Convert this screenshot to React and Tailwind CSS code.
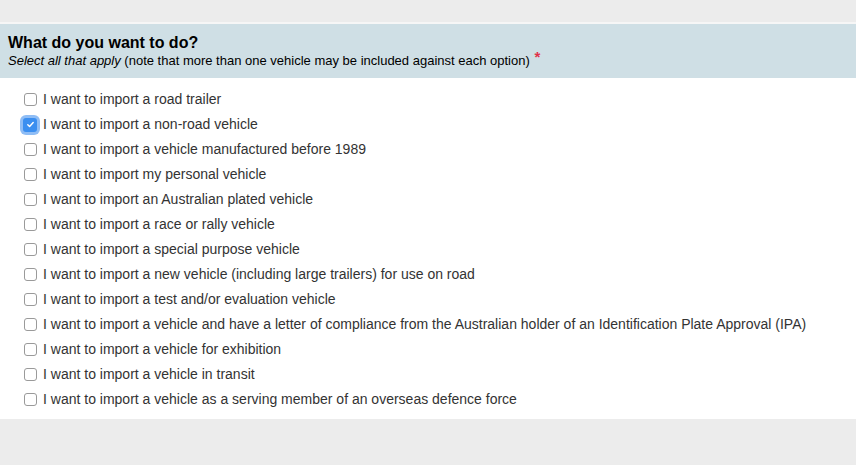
const options = [
  'I want to import a road trailer',
  'I want to import a non-road vehicle',
  'I want to import a vehicle manufactured before 1989',
  'I want to import my personal vehicle',
  'I want to import an Australian plated vehicle',
  'I want to import a race or rally vehicle',
  'I want to import a special purpose vehicle',
  'I want to import a new vehicle (including large trailers) for use on road',
  'I want to import a test and/or evaluation vehicle',
  'I want to import a vehicle and have a letter of compliance from the Australian holder of an Identification Plate Approval (IPA)',
  'I want to import a vehicle for exhibition',
  'I want to import a vehicle in transit',
  'I want to import a vehicle as a serving member of an overseas defence force',
];

const Checkbox = ({ checked }) =>
  checked ? (
    <span className="w-[14px] h-[14px] rounded-[3px] bg-[#3b8ff0] ring-[3px] ring-[#8fbdf5] flex items-center justify-center">
      <svg width="9" height="9" viewBox="0 0 10 10" fill="none">
        <path d="M2 5.2l2 2L8 2.8" stroke="white" strokeWidth="1.6" strokeLinecap="round" strokeLinejoin="round" />
      </svg>
    </span>
  ) : (
    <span className="w-[13px] h-[13px] rounded-[3px] border border-[#9a9a9a] bg-white" />
  );

export default function App() {
  return (
    <div className="w-[856px] h-[465px] bg-[#ececec] pt-[22px] font-['Liberation_Sans',Arial,sans-serif]">
      <div className="border-t-2 border-[#f6f6f6]">
        <div className="bg-[#cfdfe5] h-[54px] px-2 pt-[9px]">
          <h2 className="text-[16px] font-bold leading-[19px] text-black">What do you want to do?</h2>
          <p className="text-[13px] leading-[15px] text-black">
            <em>Select all that apply</em> (note that more than one vehicle may be included against each option){' '}
            <span className="text-[#e0324a] font-bold text-[15px] relative -top-[3px] ml-[1px]">*</span>
          </p>
        </div>
        <ul className="bg-white pt-[9px] pb-[7px] pl-[23px]">
          {options.map((o, i) => (
            <li key={o} className="h-[25px] flex items-center gap-[6px] text-[14px] text-[#333]">
              <span className="w-[14px] flex items-center justify-center">
                <Checkbox checked={i === 1} />
              </span>
              {o}
            </li>
          ))}
        </ul>
      </div>
    </div>
  );
}
